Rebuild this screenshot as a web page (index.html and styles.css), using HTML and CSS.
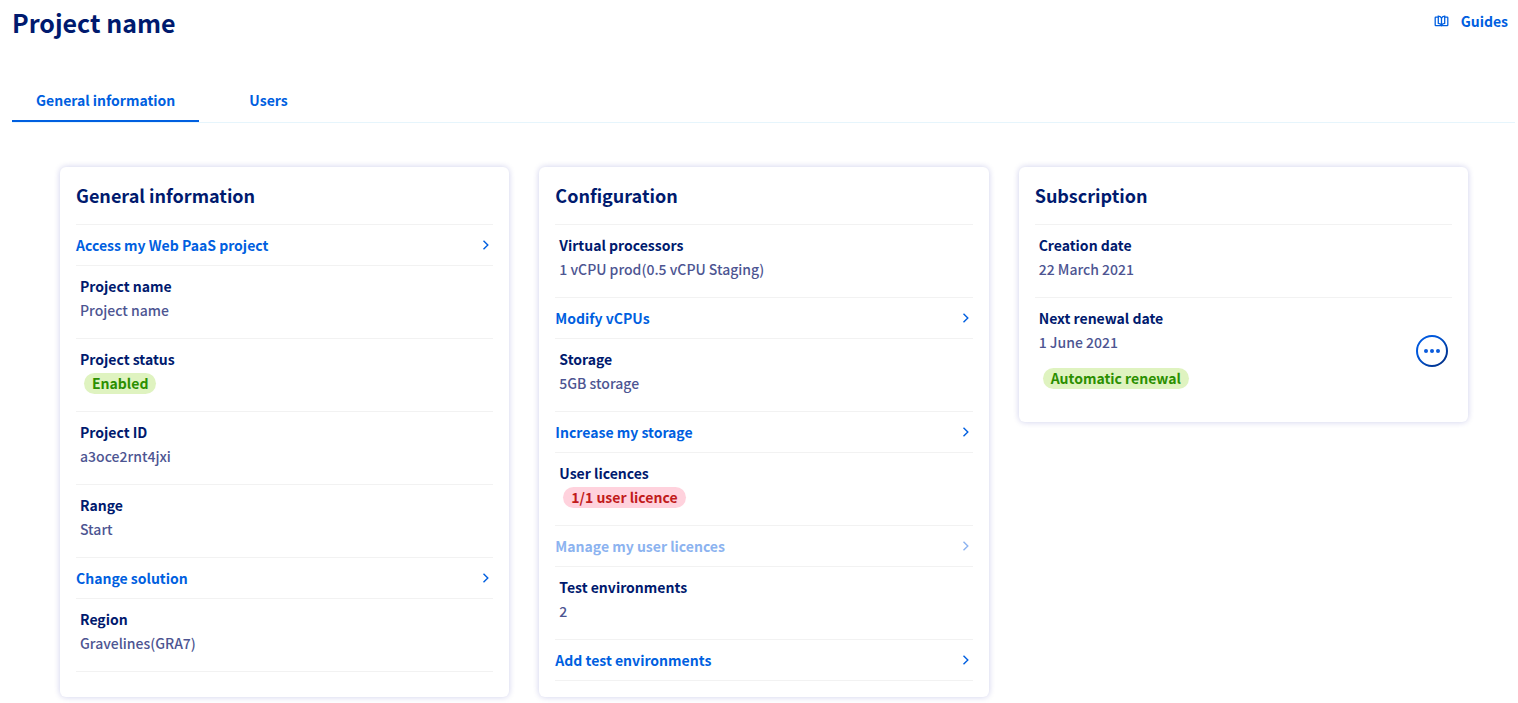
FILE: index.html
```html
<!DOCTYPE html>
<html lang="en">
<head>
<meta charset="utf-8">
<title>Project name</title>
<link rel="stylesheet" href="styles.css">
</head>
<body>
<svg class="sprite" aria-hidden="true">
  <symbol id="chevron" viewBox="0 0 8 12"><path d="M1.500 1.800 5.800 6 1.500 10.200" fill="none" stroke="currentColor" stroke-width="1.400"/></symbol>
</svg>
<header class="header">
  <h1 class="title">Project name</h1>
  <a class="guides" href="#guides">
    <svg class="guides-icon" viewBox="0 0 15 12" aria-hidden="true"><path d="M4 2.200H1.800Q1.200 2.200 1.200 2.800V10Q1.200 10.600 1.800 10.600H13.200Q13.800 10.600 13.800 10V2.800Q13.800 2.200 13.200 2.200H11M4.300 1.200C6 1.500 7.100 2.200 7.500 3.200 7.900 2.200 9 1.500 10.700 1.200V8.300C9 8.600 7.900 9.400 7.500 10.300 7.100 9.400 6 8.600 4.300 8.300ZM7.500 3.200V10.300" fill="none" stroke="currentColor" stroke-width="1.300"/></svg>
    Guides
  </a>
</header>
<nav class="tabs">
  <a class="tab tab-active" href="#general" aria-current="page">General information</a>
  <a class="tab" href="#users">Users</a>
</nav>
<main class="cards">
  <section class="card">
    <h2 class="card-title">General information</h2>
    <div class="rows">
      <a class="row action" href="#access">Access my Web PaaS project<svg class="chevron"><use href="#chevron"/></svg></a>
      <dl class="row item"><dt>Project name</dt><dd>Project name</dd></dl>
      <dl class="row item"><dt>Project status</dt><dd><span class="badge badge-success">Enabled</span></dd></dl>
      <dl class="row item"><dt>Project ID</dt><dd>a3oce2rnt4jxi</dd></dl>
      <dl class="row item"><dt>Range</dt><dd>Start</dd></dl>
      <a class="row action" href="#solution">Change solution<svg class="chevron"><use href="#chevron"/></svg></a>
      <dl class="row item"><dt>Region</dt><dd>Gravelines(GRA7)</dd></dl>
    </div>
  </section>
  <section class="card">
    <h2 class="card-title">Configuration</h2>
    <div class="rows">
      <dl class="row item"><dt>Virtual processors</dt><dd>1 vCPU prod(0.5 vCPU Staging)</dd></dl>
      <a class="row action" href="#vcpus">Modify vCPUs<svg class="chevron"><use href="#chevron"/></svg></a>
      <dl class="row item"><dt>Storage</dt><dd>5GB storage</dd></dl>
      <a class="row action" href="#storage">Increase my storage<svg class="chevron"><use href="#chevron"/></svg></a>
      <dl class="row item"><dt>User licences</dt><dd><span class="badge badge-error">1/1 user licence</span></dd></dl>
      <button class="row action" type="button" disabled>Manage my user licences<svg class="chevron"><use href="#chevron"/></svg></button>
      <dl class="row item"><dt>Test environments</dt><dd>2</dd></dl>
      <a class="row action" href="#environments">Add test environments<svg class="chevron"><use href="#chevron"/></svg></a>
    </div>
  </section>
  <section class="card card-short">
    <h2 class="card-title">Subscription</h2>
    <div class="rows rows-open">
      <dl class="row item"><dt>Creation date</dt><dd>22 March 2021</dd></dl>
      <div class="row item renewal">
        <dl class="renewal-info"><dt>Next renewal date</dt><dd>1 June 2021</dd><dd class="renewal-mode"><span class="badge badge-success">Automatic renewal</span></dd></dl>
        <button class="menu" type="button" aria-label="Actions">
          <svg class="menu-icon" viewBox="0 0 32 32" aria-hidden="true">
            <defs><linearGradient id="ring" x1="0" y1="0" x2="1" y2="1"><stop offset="0.3" stop-color="#0058dc"/><stop offset="1" stop-color="#002a7c"/></linearGradient></defs>
            <circle cx="16" cy="16" r="15" fill="none" stroke="url(#ring)" stroke-width="2"/>
            <g fill="#0a5bdc"><circle cx="10" cy="16" r="2"/><circle cx="16" cy="16" r="2"/><circle cx="22" cy="16" r="2"/></g>
          </svg>
        </button>
      </div>
    </div>
  </section>
</main>
</body>
</html>
```
FILE: styles.css
```css
* { box-sizing: border-box; }
body {
  margin: 0;
  padding: 0 3px 6px 12px;
  background: #fff;
  color: #001a6e;
  font: 500 14px/24px "Noto Sans CJK JP", "Noto Sans CJK SC", sans-serif;
}
h1, h2, dl, dd { margin: 0; }
a { color: #005fe0; text-decoration: none; }
.sprite { display: none; }
.header {
  display: flex;
  justify-content: space-between;
  align-items: flex-start;
  padding: 2px 7px 0 0;
}
.title { font-size: 25px; line-height: 40px; font-weight: 700; }
.guides { display: flex; align-items: center; gap: 12px; margin-top: 7px; font-weight: 700; }
.guides-icon { width: 15px; height: 12px; }
.tabs {
  display: flex;
  gap: 26px;
  margin-top: 37px;
  border-bottom: 1px solid #e6f5fc;
}
.tab { padding: 9px 24px 8px; border-bottom: 2px solid transparent; font-weight: 700; }
.tab-active { border-color: #005fe0; }
.cards {
  display: grid;
  grid-template-columns: repeat(3, 1fr);
  gap: 30px;
  padding: 44px 47px 0 48px;
}
.card { padding: 16px; border-radius: 6px; box-shadow: 0 0 6px rgba(0, 14, 156, 0.2); }
.card-short { align-self: start; }
.card-title { margin-bottom: 16px; font-size: 18px; line-height: 25px; font-weight: 700; }
.rows { border-bottom: 1px solid #f2f2f2; }
.rows-open { border-bottom: 0; }
.row { border: 0; border-top: 1px solid #f2f2f2; }
.item { padding: 8px 4px 16px; }
dt { font-weight: 700; }
dd { color: #4d5592; }
.action {
  display: flex;
  justify-content: space-between;
  align-items: center;
  width: 100%;
  padding: 8px 3px 8px 0;
  background: none;
  color: #005fe0;
  font: inherit;
  font-weight: 700;
  text-align: left;
}
.action:disabled { color: #8cb3f0; }
.chevron { width: 8px; height: 12px; }
.badge {
  display: inline-block;
  margin-left: 4px;
  padding: 0 8px;
  border-radius: 11px;
  line-height: 21px;
  font-weight: 700;
}
.badge-success { background: #dff3c0; color: #2b8f00; }
.badge-error { background: #ffd2dd; color: #c11b1b; }
.renewal { display: flex; justify-content: space-between; align-items: center; }
.renewal-mode { margin-top: 12px; }
.menu { margin-top: 6px; padding: 0; border: 0; background: none; }
.menu-icon { display: block; width: 32px; height: 32px; }
```
